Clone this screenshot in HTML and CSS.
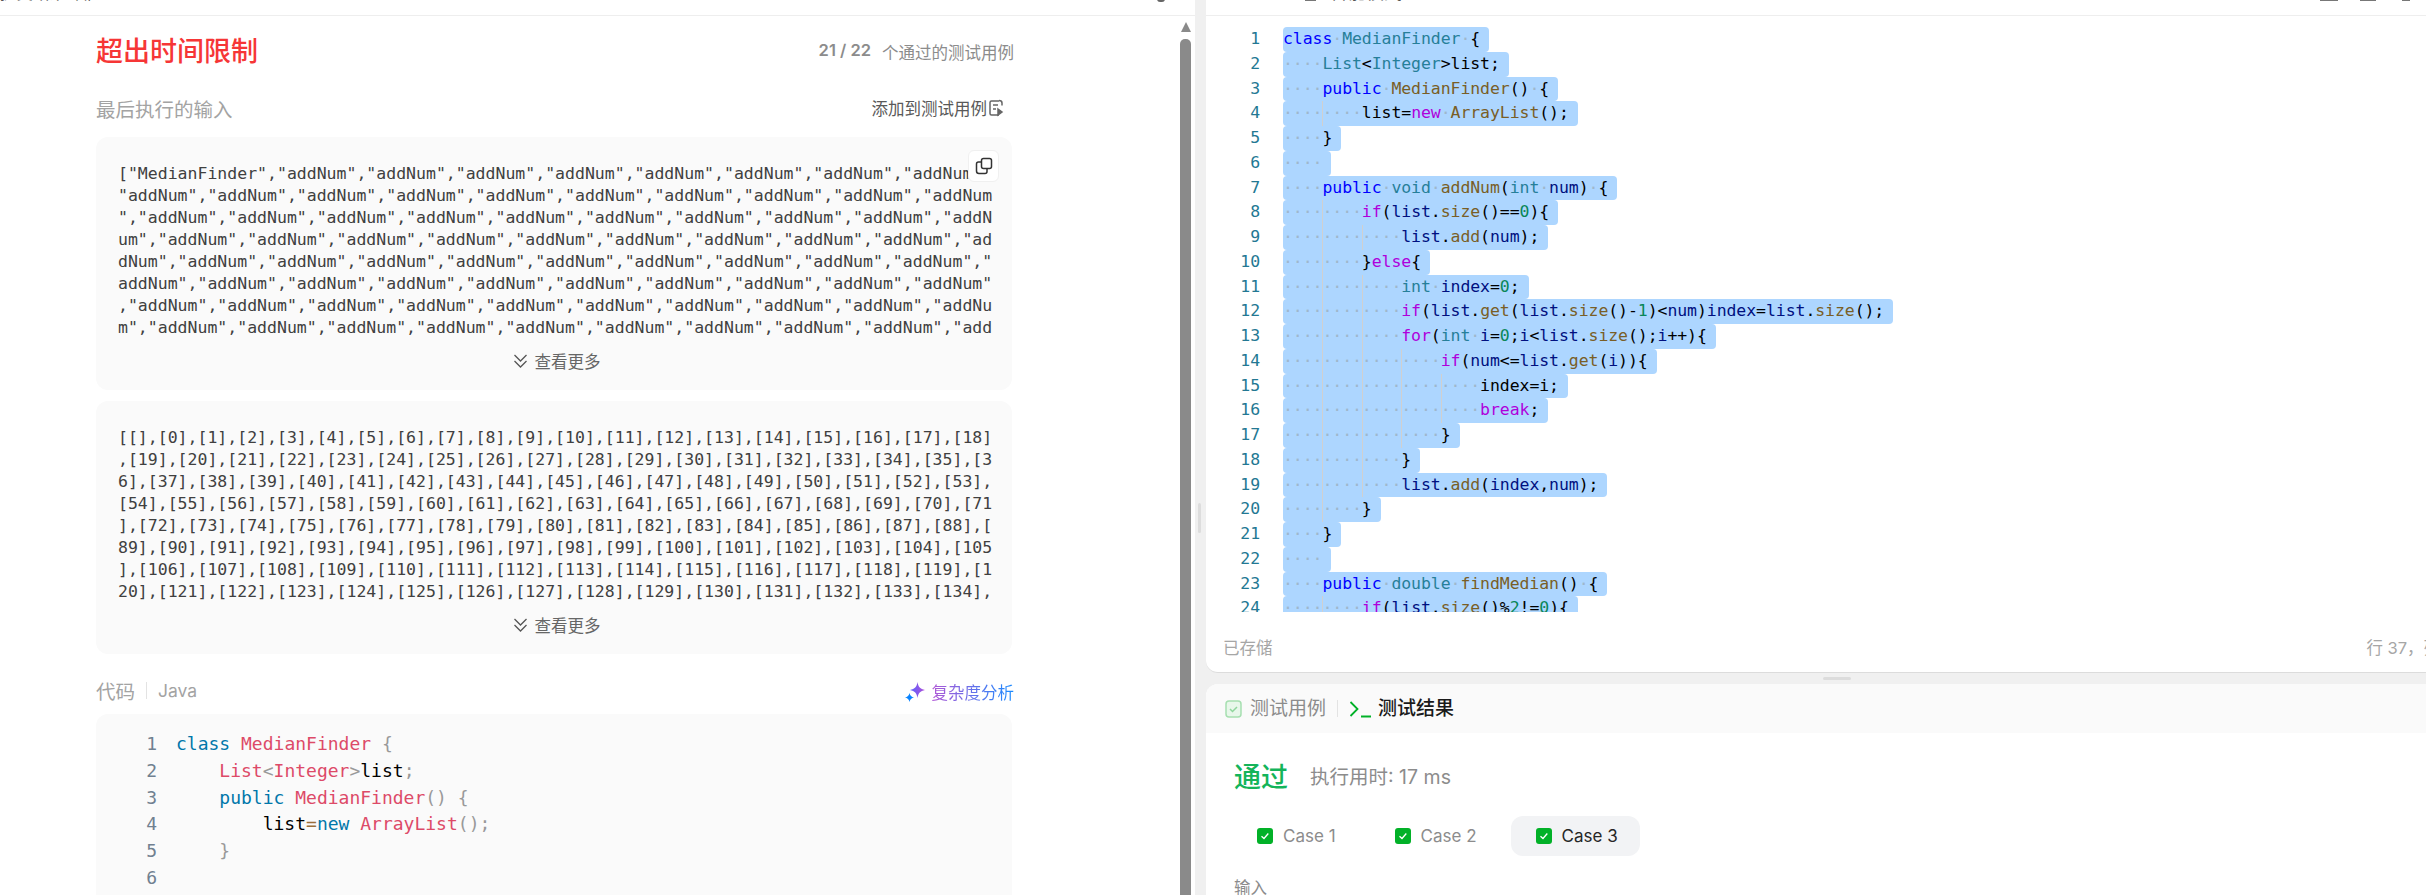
FILE: index.html
```html
<!DOCTYPE html>
<html lang="zh">
<head>
<meta charset="utf-8">
<title>超出时间限制</title>
<link rel="stylesheet" href="styles.css">
</head>
<body>
<div class="page">
  <section class="left">
    <div class="crop-head">
      <span class="crop-text left-crop">提交结果详情</span>
      <span class="crop-dot"></span>
    </div>
    <div class="left-body">
      <main class="content">
        <div class="row title-row">
          <h1 class="tle">超出时间限制</h1>
          <div class="passed"><b>21 / 22</b><span>个通过的测试用例</span></div>
        </div>
        <div class="row label-row">
          <span class="label">最后执行的输入</span>
          <span class="add">添加到测试用例<svg width="17" height="20" viewBox="0 0 17 20" fill="none" stroke="#666" stroke-width="1.5"><path d="M11 3H3.500A1.500 1.500 0 0 0 2 4.500v11A1.500 1.500 0 0 0 3.500 17H11"/><path d="M5 7h5M5 11h3"/><path d="M11 2.500c2 0 3 1 3 2.500v2.500" /><path d="M10 11l4 3-4 3z" fill="#666"/></svg></span>
        </div>
        <div class="card">
          <button class="copy"><svg width="18" height="18" viewBox="0 0 18 18" fill="none" stroke="#333" stroke-width="1.500"><rect x="6.500" y="1.500" width="10" height="10" rx="2"/><path d="M6.500 5H3.500a2 2 0 0 0-2 2v7a2.500 2.500 0 0 0 2.500 2.500h6a2 2 0 0 0 2-2v-3"/></svg></button>
          <div class="mono-block">
            <div class="ml">["MedianFinder","addNum","addNum","addNum","addNum","addNum","addNum","addNum","addNum",</div>
            <div class="ml">"addNum","addNum","addNum","addNum","addNum","addNum","addNum","addNum","addNum","addNum</div>
            <div class="ml">","addNum","addNum","addNum","addNum","addNum","addNum","addNum","addNum","addNum","addN</div>
            <div class="ml">um","addNum","addNum","addNum","addNum","addNum","addNum","addNum","addNum","addNum","ad</div>
            <div class="ml">dNum","addNum","addNum","addNum","addNum","addNum","addNum","addNum","addNum","addNum","</div>
            <div class="ml">addNum","addNum","addNum","addNum","addNum","addNum","addNum","addNum","addNum","addNum"</div>
            <div class="ml">,"addNum","addNum","addNum","addNum","addNum","addNum","addNum","addNum","addNum","addNu</div>
            <div class="ml">m","addNum","addNum","addNum","addNum","addNum","addNum","addNum","addNum","addNum","add</div>
          </div>
          <div class="more"><svg width="17" height="18" viewBox="0 0 17 18" fill="none" stroke="#555" stroke-width="1.300"><path d="M2.500 3l6 6 6-6M2.500 9l6 6 6-6"/></svg>查看更多</div>
        </div>
        <div class="card card-second">
          <div class="mono-block">
            <div class="ml">[[],[0],[1],[2],[3],[4],[5],[6],[7],[8],[9],[10],[11],[12],[13],[14],[15],[16],[17],[18]</div>
            <div class="ml">,[19],[20],[21],[22],[23],[24],[25],[26],[27],[28],[29],[30],[31],[32],[33],[34],[35],[3</div>
            <div class="ml">6],[37],[38],[39],[40],[41],[42],[43],[44],[45],[46],[47],[48],[49],[50],[51],[52],[53],</div>
            <div class="ml">[54],[55],[56],[57],[58],[59],[60],[61],[62],[63],[64],[65],[66],[67],[68],[69],[70],[71</div>
            <div class="ml">],[72],[73],[74],[75],[76],[77],[78],[79],[80],[81],[82],[83],[84],[85],[86],[87],[88],[</div>
            <div class="ml">89],[90],[91],[92],[93],[94],[95],[96],[97],[98],[99],[100],[101],[102],[103],[104],[105</div>
            <div class="ml">],[106],[107],[108],[109],[110],[111],[112],[113],[114],[115],[116],[117],[118],[119],[1</div>
            <div class="ml">20],[121],[122],[123],[124],[125],[126],[127],[128],[129],[130],[131],[132],[133],[134],</div>
          </div>
          <div class="more"><svg width="17" height="18" viewBox="0 0 17 18" fill="none" stroke="#555" stroke-width="1.300"><path d="M2.500 3l6 6 6-6M2.500 9l6 6 6-6"/></svg>查看更多</div>
        </div>
        <div class="row code-row">
          <div class="code-lang"><span class="label">代码</span><i class="sep"></i><span class="java">Java</span></div>
          <span class="analyze"><svg width="20" height="20" viewBox="0 0 20 20"><defs><linearGradient id="spark" x1="0" y1="0" x2="1" y2="0"><stop offset="0" stop-color="#5a63ff"/><stop offset="1" stop-color="#b14fd8"/></linearGradient></defs><path fill="url(#spark)" d="M12.500 0C13.300 4.800 15.200 7 20 8C15.200 9 13.300 11.200 12.500 16C11.700 11.200 9.800 9 5 8C9.800 7 11.700 4.800 12.500 0z"/><path fill="#0a84ff" d="M4.500 11C5 13.500 6.500 15 9 15.500C6.500 16 5 17.500 4.500 20C4 17.500 2.500 16 0 15.500C2.500 15 4 13.500 4.500 11z"/></svg><span class="grad">复杂度分析</span></span>
        </div>
        <div class="card code-card">
          <div class="pl"><span class="pn">1</span><span><span class="k">class</span> <span class="c">MedianFinder</span> <span class="p">{</span></span></div>
          <div class="pl"><span class="pn">2</span><span>    <span class="c">List</span><span class="p">&lt;</span><span class="c">Integer</span><span class="p">&gt;</span>list<span class="p">;</span></span></div>
          <div class="pl"><span class="pn">3</span><span>    <span class="k">public</span> <span class="c">MedianFinder</span><span class="p">()</span> <span class="p">{</span></span></div>
          <div class="pl"><span class="pn">4</span><span>        list<span class="o">=</span><span class="k">new</span> <span class="c">ArrayList</span><span class="p">();</span></span></div>
          <div class="pl"><span class="pn">5</span><span>    <span class="p">}</span></span></div>
          <div class="pl"><span class="pn">6</span><span>    </span></div>
        </div>
      </main>
      <div class="scrollbar"><i class="arrow"></i><i class="thumb"></i></div>
    </div>
  </section>

  <div class="gutter"><i class="grip"></i></div>

  <section class="right">
    <div class="editor-panel">
      <div class="crop-head">
        <i class="crop-bar short"></i>
        <span class="crop-text mode">智能模式</span>
        <span class="crop-icons"><i class="crop-bar wide"></i><i class="crop-bar peak"></i><i class="crop-bar tiny"></i></span>
      </div>
      <div class="editor">
        <div class="el"><span class="ln">1</span><span class="sel"><b class="kw">class</b><i class="d">·</i><b class="ty">MedianFinder</b><i class="d">·</i>{</span></div>
        <div class="el"><span class="ln">2</span><span class="sel"><i class="ws">····</i><b class="ty">List</b>&lt;<b class="ty">Integer</b>&gt;list;</span></div>
        <div class="el"><span class="ln">3</span><span class="sel"><i class="ws">····</i><b class="kw">public</b><i class="d">·</i><b class="fn">MedianFinder</b>()<i class="d">·</i>{</span></div>
        <div class="el"><span class="ln">4</span><span class="sel"><i class="ws">····</i><i class="ws g">····</i>list=<b class="cf">new</b><i class="d">·</i><b class="fn">ArrayList</b>();</span></div>
        <div class="el"><span class="ln">5</span><span class="sel"><i class="ws">····</i>}</span></div>
        <div class="el"><span class="ln">6</span><span class="sel"><i class="ws">····</i></span></div>
        <div class="el"><span class="ln">7</span><span class="sel"><i class="ws">····</i><b class="kw">public</b><i class="d">·</i><b class="ty">void</b><i class="d">·</i><b class="fn">addNum</b>(<b class="ty">int</b><i class="d">·</i><b class="v">num</b>)<i class="d">·</i>{</span></div>
        <div class="el"><span class="ln">8</span><span class="sel"><i class="ws">····</i><i class="ws g">····</i><b class="cf">if</b>(<b class="v">list</b>.<b class="fn">size</b>()==<b class="n">0</b>){</span></div>
        <div class="el"><span class="ln">9</span><span class="sel"><i class="ws">····</i><i class="ws g">····</i><i class="ws g">····</i><b class="v">list</b>.<b class="fn">add</b>(<b class="v">num</b>);</span></div>
        <div class="el"><span class="ln">10</span><span class="sel"><i class="ws">····</i><i class="ws g">····</i>}<b class="cf">else</b>{</span></div>
        <div class="el"><span class="ln">11</span><span class="sel"><i class="ws">····</i><i class="ws g">····</i><i class="ws g">····</i><b class="ty">int</b><i class="d">·</i><b class="v">index</b>=<b class="n">0</b>;</span></div>
        <div class="el"><span class="ln">12</span><span class="sel"><i class="ws">····</i><i class="ws g">····</i><i class="ws g">····</i><b class="cf">if</b>(<b class="v">list</b>.<b class="fn">get</b>(<b class="v">list</b>.<b class="fn">size</b>()-<b class="n">1</b>)&lt;<b class="v">num</b>)<b class="v">index</b>=<b class="v">list</b>.<b class="fn">size</b>();</span></div>
        <div class="el"><span class="ln">13</span><span class="sel"><i class="ws">····</i><i class="ws g">····</i><i class="ws g">····</i><b class="cf">for</b>(<b class="ty">int</b><i class="d">·</i><b class="v">i</b>=<b class="n">0</b>;<b class="v">i</b>&lt;<b class="v">list</b>.<b class="fn">size</b>();<b class="v">i</b>++){</span></div>
        <div class="el"><span class="ln">14</span><span class="sel"><i class="ws">····</i><i class="ws g">····</i><i class="ws g">····</i><i class="ws g">····</i><b class="cf">if</b>(<b class="v">num</b>&lt;=<b class="v">list</b>.<b class="fn">get</b>(<b class="v">i</b>)){</span></div>
        <div class="el"><span class="ln">15</span><span class="sel"><i class="ws">····</i><i class="ws g">····</i><i class="ws g">····</i><i class="ws g">····</i><i class="ws g">····</i>index=i;</span></div>
        <div class="el"><span class="ln">16</span><span class="sel"><i class="ws">····</i><i class="ws g">····</i><i class="ws g">····</i><i class="ws g">····</i><i class="ws g">····</i><b class="cf">break</b>;</span></div>
        <div class="el"><span class="ln">17</span><span class="sel"><i class="ws">····</i><i class="ws g">····</i><i class="ws g">····</i><i class="ws g">····</i>}</span></div>
        <div class="el"><span class="ln">18</span><span class="sel"><i class="ws">····</i><i class="ws g">····</i><i class="ws g">····</i>}</span></div>
        <div class="el"><span class="ln">19</span><span class="sel"><i class="ws">····</i><i class="ws g">····</i><i class="ws g">····</i><b class="v">list</b>.<b class="fn">add</b>(<b class="v">index</b>,<b class="v">num</b>);</span></div>
        <div class="el"><span class="ln">20</span><span class="sel"><i class="ws">····</i><i class="ws g">····</i>}</span></div>
        <div class="el"><span class="ln">21</span><span class="sel"><i class="ws">····</i>}</span></div>
        <div class="el"><span class="ln">22</span><span class="sel"><i class="ws">····</i></span></div>
        <div class="el"><span class="ln">23</span><span class="sel"><i class="ws">····</i><b class="kw">public</b><i class="d">·</i><b class="ty">double</b><i class="d">·</i><b class="fn">findMedian</b>()<i class="d">·</i>{</span></div>
        <div class="el"><span class="ln">24</span><span class="sel"><i class="ws">····</i><i class="ws g">····</i><b class="cf">if</b>(<b class="v">list</b>.<b class="fn">size</b>()%<b class="n">2</b>!=<b class="n">0</b>){</span></div>
      </div>
      <div class="status"><span>已存储</span><span>行 37，列 9</span></div>
    </div>
    <div class="hsplit"><i class="hgrip"></i></div>
    <div class="result-panel">
      <div class="tabs">
        <svg width="17" height="18" viewBox="0 0 17 18" fill="none"><rect x="1" y="1" width="15" height="16" rx="3" fill="#e8f7ea" stroke="#a6dfb0" stroke-width="1.500"/><path d="M5 9l2.500 2.500L12 7" stroke="#8fd69c" stroke-width="1.500"/></svg>
        <span class="tab">测试用例</span>
        <i class="tab-sep"></i>
        <svg width="23" height="18" viewBox="0 0 23 18" fill="none" stroke="#02b128" stroke-width="1.800"><path d="M1.500 2l7 7-7 7"/><path d="M12 16.500h10"/></svg>
        <span class="tab active">测试结果</span>
      </div>
      <div class="result-body">
        <div class="verdict"><span class="pass">通过</span><span class="time">执行用时: 17 ms</span></div>
        <div class="cases">
          <div class="case"><svg width="16" height="16" viewBox="0 0 16 16"><rect width="16" height="16" rx="3" fill="#02b128"/><path d="M4.500 8.200l2.500 2.300 4.300-5" fill="none" stroke="#fff" stroke-width="1.300"/></svg>Case 1</div>
          <div class="case"><svg width="16" height="16" viewBox="0 0 16 16"><rect width="16" height="16" rx="3" fill="#02b128"/><path d="M4.500 8.200l2.500 2.300 4.300-5" fill="none" stroke="#fff" stroke-width="1.300"/></svg>Case 2</div>
          <div class="case current"><svg width="16" height="16" viewBox="0 0 16 16"><rect width="16" height="16" rx="3" fill="#02b128"/><path d="M4.500 8.200l2.500 2.300 4.300-5" fill="none" stroke="#fff" stroke-width="1.300"/></svg>Case 3</div>
        </div>
        <div class="input-label">输入</div>
      </div>
    </div>
  </section>
</div>
</body>
</html>
```
FILE: styles.css
```css
* { box-sizing: border-box; }
html, body { margin: 0; padding: 0; height: 100%; overflow: hidden; }
body {
  background: #f0f0f0;
  font-family: "Inter", "Noto Sans CJK SC", sans-serif;
  color: #262626;
}
i { font-style: normal; }
b { font-weight: 400; }

.page { display: flex; width: 2426px; height: 895px; overflow: hidden; }

/* Cropped header strip shared by both panes */
.crop-head {
  height: 16px;
  display: flex;
  align-items: flex-end;
  gap: 14px;
  overflow: hidden;
  background: #fff;
  border-bottom: 1px solid #eee;
}
.crop-text { font-size: 18px; line-height: 24px; color: #555; white-space: nowrap; margin-bottom: 10px; flex: none; }
.left-crop { width: 92px; overflow: hidden; font-size: 16.500px; }
.crop-dot { margin-left: auto; margin-right: 30px; margin-bottom: 13px; width: 8px; height: 3px; border-radius: 0 0 4px 4px; background: #666; }
.crop-bar { display: block; background: #777; margin-bottom: 14px; height: 2px; flex: none; }
.crop-bar.short { width: 11px; margin-left: 99px; }
.crop-bar.wide { width: 18px; }
.crop-bar.peak { width: 16px; }
.crop-bar.tiny { width: 8px; margin-left: 4px; }
.crop-icons { margin-left: 904px; display: flex; gap: 22px; align-items: flex-end; }
.mode { font-size: 18px; }

/* Left pane */
.left { flex: 0 0 1195px; background: #fff; display: flex; flex-direction: column; overflow: hidden; }
.left-body { flex: 1; display: flex; min-height: 0; }
.content { flex: 0 0 1180px; padding: 16px 168px 0 96px; overflow: hidden; }
.scrollbar { flex: 0 0 15px; padding: 6px 4px 0 0; display: flex; flex-direction: column; align-items: stretch; gap: 7px; }
.arrow { display: block; width: 0; height: 0; margin: 0 auto; border-left: 5.500px solid transparent; border-right: 5.500px solid transparent; border-bottom: 10px solid #8a8a8a; }
.thumb { flex: 1; background: #8a8a8a; border-radius: 5px 5px 0 0; }

.row { display: flex; justify-content: space-between; align-items: center; }
.title-row { height: 40px; }
.tle { margin: 0; font-size: 27px; line-height: 40px; font-weight: 500; color: #f63636; }
.passed { font-size: 16.500px; color: #8c8c8c; display: flex; gap: 11px; margin-right: -2px; }
.passed b { font-weight: 600; }
.label-row { height: 30px; margin-top: 21px; }
.label { font-size: 19.500px; color: #a3a3a3; }
.add { font-size: 16.500px; color: #595959; display: flex; align-items: center; gap: 1px; margin-right: 7px; }

.card { position: relative; background: #fafafa; border-radius: 12px; height: 253px; margin-top: 14px; padding: 26px 18px 0 22px; }
.card-second { margin-top: 11px; }
.mono-block {
  font-family: "DejaVu Sans Mono", monospace;
  font-size: 16.500px;
  line-height: 22px;
  height: 176px;
  overflow: hidden;
  color: #404040;
}
.ml { height: 22px; white-space: pre; overflow: hidden; }
.more { height: 24px; margin-top: 10px; display: flex; justify-content: center; align-items: center; gap: 6px; font-size: 16.500px; color: #666; }
.copy {
  position: absolute; top: 13px; right: 13px;
  width: 31px; height: 32px; padding: 0;
  display: flex; align-items: center; justify-content: center;
  background: #fff; border: 1px solid #f0f0f0; border-radius: 6px;
}

.code-row { height: 30px; margin-top: 21px; }
.code-lang { display: flex; align-items: center; }
.sep { width: 1px; height: 17px; background: #e3e3e3; margin: 0 11px; }
.java { font-size: 17.500px; color: #a3a3a3; }
.analyze { display: flex; align-items: center; gap: 7px; margin-right: -2px; margin-top: 4px; }
.grad {
  font-size: 16.500px;
  background: linear-gradient(90deg, #b057d6, #1a8cff);
  -webkit-background-clip: text;
  background-clip: text;
  color: transparent;
}

.code-card { margin-top: 9px; height: 300px; padding: 17px 0 0 0; font-family: "DejaVu Sans Mono", monospace; font-size: 18px; color: #000; }
.pl { display: flex; height: 26.800px; line-height: 26.800px; white-space: pre; }
.pn { width: 61px; margin-right: 19px; text-align: right; color: #708090; flex: none; }
.k { color: #0077aa; }
.c { color: #dd4a68; }
.p { color: #999; }
.o { color: #9a6e3a; }

/* Splitter */
.gutter { flex: 0 0 11px; padding: 503px 0 0 3px; }
.grip { display: block; width: 3px; height: 30px; background: #ddd; border-radius: 2px; }

/* Right pane */
.right { flex: 0 0 1249px; display: flex; flex-direction: column; }
.editor-panel { height: 673px; background: #fff; border-bottom: 1px solid #dcdcdc; border-bottom-left-radius: 12px; overflow: hidden; }
.editor {
  height: 596px;
  padding-top: 11px;
  overflow: hidden;
  font-family: "DejaVu Sans Mono", monospace;
  font-size: 16.500px;
  letter-spacing: -0.080px;
  line-height: 24.750px;
  color: #000;
}
.el { display: flex; height: 24.750px; white-space: pre; }
.ln { flex: none; width: 54px; margin-right: 23px; text-align: right; color: #237893; }
.sel { display: inline-block; height: 24.750px; background: #add6ff; padding-right: 9px; border-radius: 4px; }
.d, .ws { color: #9fb7cc; }
.ws { display: inline-block; height: 24.750px; vertical-align: top; }
.ws.g { box-shadow: inset 1px 0 0 #d0d0d0; }
.kw { color: #0000ff; }
.ty { color: #267f99; }
.fn { color: #795e26; }
.cf { color: #af00db; }
.v { color: #001080; }
.n { color: #098658; }

.status {
  height: 60px;
  padding: 21px 0 0 17px;
  display: flex;
  justify-content: space-between;
  font-size: 16.500px;
  line-height: 30px;
  color: #a6a6a6;
}

.hsplit { height: 11px; display: flex; justify-content: center; padding: 4px 0 0 0; }
.hgrip { display: block; width: 28px; height: 3px; background: #dcdcdc; border-radius: 2px; margin-left: 12px; }

.result-panel { flex: 1; background: #fff; border-top-left-radius: 12px; overflow: hidden; }
.tabs { height: 49px; background: #fafafa; display: flex; align-items: center; padding-left: 19px; font-size: 19px; }
.tab { color: #8c8c8c; margin-left: 8px; line-height: 24px; }
.tab.active { color: #1a1a1a; font-weight: 500; margin-left: 6px; }
.tab-sep { width: 1px; height: 17px; background: #e3e3e3; margin: 0 11px; }
.result-body { padding: 22px 0 0 26px; }
.verdict { display: flex; align-items: center; height: 40px; margin-left: 2px; gap: 22px; }
.pass { font-size: 27px; color: #14b45a; font-weight: 500; }
.time { font-size: 19.500px; color: #8c8c8c; }
.cases { display: flex; gap: 12px; margin-top: 21px; }
.case { height: 40px; display: flex; align-items: center; gap: 10px; padding: 0 22px 0 25px; border-radius: 12px; font-size: 17px; color: #8c8c8c; }
.case.current { background: #f2f3f5; color: #262626; }
.input-label { margin: 20px 0 0 2px; font-size: 16.500px; line-height: 24px; color: #8c8c8c; }
```
